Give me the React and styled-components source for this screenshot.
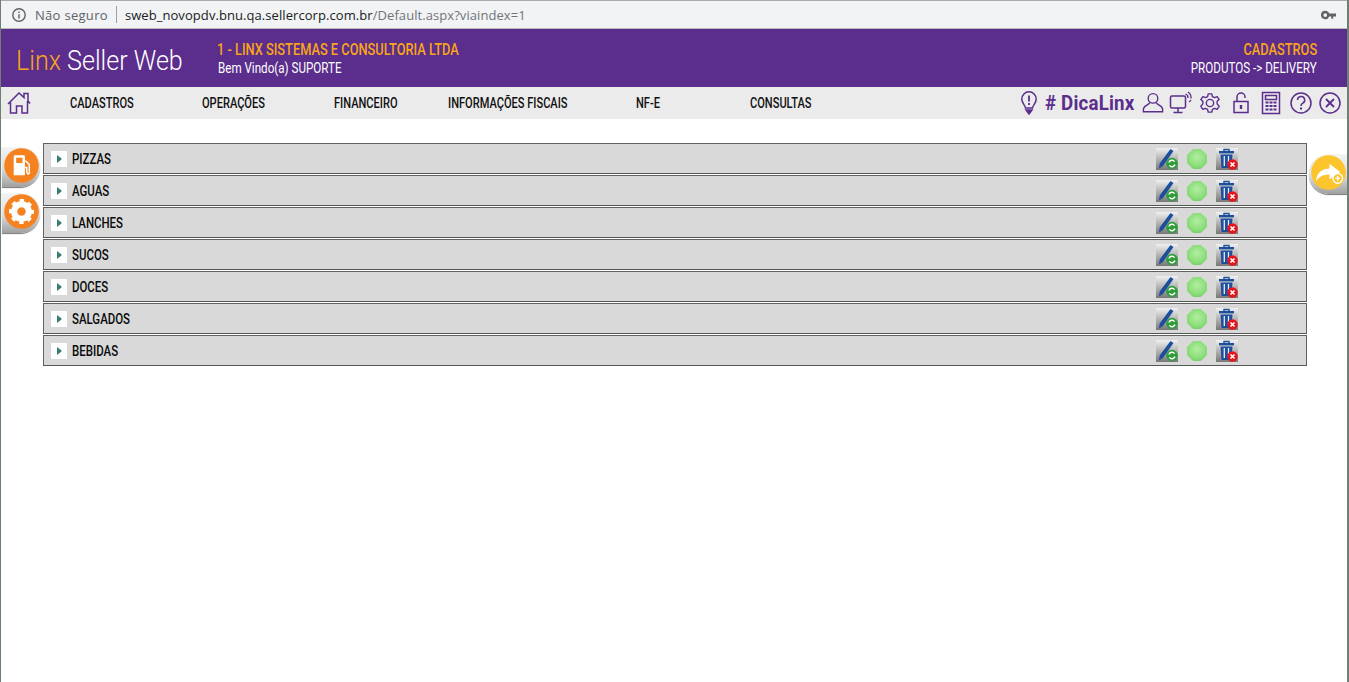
import React from 'react';
import styled, { createGlobalStyle } from 'styled-components';

const categorias = ['PIZZAS', 'AGUAS', 'LANCHES', 'SUCOS', 'DOCES', 'SALGADOS', 'BEBIDAS'];
const menu = ['CADASTROS', 'OPERAÇÕES', 'FINANCEIRO', 'INFORMAÇÕES FISCAIS', 'NF-E', 'CONSULTAS'];

const GlobalStyle = createGlobalStyle`
	html, body {
		margin: 0;
		padding: 0;
		background: #fff;
		font-family: Roboto, "Liberation Sans", sans-serif;
		overflow: hidden;
	}
`;

const Janela = styled.div`
	position: relative;
	height: 682px;
	box-sizing: border-box;
	border-left: 1px solid #6f7f74;
	border-right: 2px solid #6f7f74;
	overflow: hidden;
`;

const BarraEndereco = styled.div`
	display: flex;
	align-items: center;
	height: 29px;
	box-sizing: border-box;
	border-top: 1px solid #a9abaa;
	border-bottom: 1px solid #b9bbba;
	background: #f1f3f4;
	padding: 0 11px 0 10px;
	font-family: "Open Sans", sans-serif;
	font-size: 13px;
`;

const NaoSeguro = styled.span`
	color: #5f6368;
	margin-left: 8px;
	letter-spacing: 0.3px;
`;

const Separador = styled.span`
	width: 1px;
	height: 17px;
	background: #9aa0a6;
	margin: 0 8px;
`;

const Host = styled.span`
	color: #202124;
	letter-spacing: 0.07px;
`;

const Caminho = styled.span`
	color: #70757a;
	letter-spacing: 0.07px;
`;

const Chave = styled.svg`
	margin-left: auto;
`;

const Cabecalho = styled.header`
	display: flex;
	height: 58px;
	background: #5b2d8c;
	color: #fff;
`;

const Logo = styled.div`
	width: 216px;
	padding: 15px 0 0 15px;
	box-sizing: border-box;
	font-size: 27px;
	font-weight: 300;
	line-height: 34px;
	white-space: nowrap;
`;

const Estreito = styled.span`
	display: inline-block;
	white-space: nowrap;
	transform: scaleX(${props => props.$escala || 0.79});
	transform-origin: ${props => props.$origem || 'left'} center;
`;

const Laranja = styled.span`
	color: #f9a51a;
`;

const Empresa = styled.div`
	display: flex;
	flex-direction: column;
	padding-top: 11px;
`;

const LinhaTitulo = styled.div`
	font-size: 16px;
	font-weight: 500;
	line-height: 19px;
	color: #f9a51a;
`;

const LinhaSub = styled.div`
	font-size: 14px;
	line-height: 16px;
	margin-top: 1px;
	margin-left: 1px;
`;

const Modulo = styled.div`
	display: flex;
	flex-direction: column;
	align-items: flex-end;
	margin-left: auto;
	padding: 11px 30px 0 0;
`;

const Menu = styled.nav`
	display: flex;
	align-items: center;
	height: 32px;
	background: #ebebeb;
	padding: 0 5px 0 6px;
`;

const MenuItens = styled.div`
	display: grid;
	grid-template-columns: 132px 132px 114px 188px 114px 100px;
	margin-left: 39px;
	color: #111;
	font-size: 14px;
	font-weight: 500;
`;

const Ferramentas = styled.div`
	display: flex;
	align-items: center;
	margin-left: auto;
	color: #5b2d8c;
`;

const Dica = styled.div`
	width: 92px;
	margin-left: 4px;
	font-size: 21px;
	font-weight: 700;
	letter-spacing: 0.01em;
`;

const Ferramenta = styled.svg`
	display: block;
	width: ${props => props.$tam || 24}px;
	height: ${props => props.$tam || 24}px;
	margin-left: ${props => props.$gap || 5}px;
	fill: none;
	stroke: #5b2d8c;
	stroke-width: 1.5;
`;

const Lista = styled.main`
	display: flex;
	flex-direction: column;
	gap: 1px;
	margin: 24px 40px 0 42px;
`;

const Linha = styled.div`
	display: flex;
	align-items: center;
	height: 31px;
	box-sizing: border-box;
	border: 1px solid #616161;
	border-bottom-color: #555;
	background: #d9d9d9;
	padding: 0 68px 0 7px;
`;

const Seta = styled.span`
	display: flex;
	align-items: center;
	justify-content: center;
	width: 16px;
	height: 16px;
	background: #fff;
	&::before {
		content: '';
		border-left: 5px solid #3a7a72;
		border-top: 4px solid transparent;
		border-bottom: 4px solid transparent;
	}
`;

const Nome = styled.div`
	margin-left: 5px;
	padding-top: 2px;
	color: #0a0a0a;
	font-size: 14.5px;
	font-weight: 500;
`;

const Acoes = styled.div`
	display: flex;
	align-items: center;
	gap: 9px;
	margin-left: auto;
`;

const Quadro = styled.svg`
	display: block;
	width: ${props => props.$tam || 22}px;
	height: 22px;
`;

const Aba = styled.div`
	position: absolute;
	top: ${props => props.$topo}px;
	${props => props.$direita ? 'right: 0;' : 'left: 1px;'}
	width: 38px;
	height: 40px;
	box-sizing: border-box;
	padding: 1px 0 0 2px;
	border-radius: ${props => props.$direita ? '20px 0 0 20px' : '0 20px 20px 0'};
	background: linear-gradient(#f4f4f4, #dcdcdc 55%, #a0a0a0);
	box-shadow: 0 1px 1px #777;
`;

const Redondo = styled.svg`
	display: block;
	width: 35px;
	height: 35px;
`;

const Editar = () => (
	<Quadro viewBox="0 0 22 22">
		<defs>
			<linearGradient id="fundo" x1="0" y1="0" x2="0" y2="1">
				<stop offset="0" stopColor="#f0f0f0" />
				<stop offset="1" stopColor="#777" />
			</linearGradient>
		</defs>
		<rect width="22" height="22" fill="url(#fundo)" />
		<path d="M14.5 1 L17.5 3 L7 18 L3 20.5 L3.6 15.5 Z" fill="#1f4f9c" />
		<circle cx="16" cy="15.5" r="5.8" fill="#2e9e3a" />
		<path d="M13 14.5 A3.2 3.2 0 0 1 18.6 13.6 M19 16.5 A3.2 3.2 0 0 1 13.4 17.4" fill="none" stroke="#fff" strokeWidth="1.5" />
	</Quadro>
);

const Status = () => (
	<Quadro $tam={20} viewBox="0 0 20 22">
		<defs>
			<radialGradient id="verde" cx="0.5" cy="0.42" r="0.62">
				<stop offset="0" stopColor="#b4ee9f" />
				<stop offset="0.75" stopColor="#88dc78" />
				<stop offset="1" stopColor="#74cf68" />
			</radialGradient>
		</defs>
		<path d="M7 1 H13 Q14 1 15 2 L19 6 Q20 7 20 8 V14 Q20 15 19 16 L15 20 Q14 21 13 21 H7 Q6 21 5 20 L1 16 Q0 15 0 14 V8 Q0 7 1 6 L5 2 Q6 1 7 1 Z" fill="url(#verde)" />
	</Quadro>
);

const Excluir = () => (
	<Quadro viewBox="0 0 22 22">
		<rect width="22" height="22" fill="url(#fundo)" />
		<path d="M8 3 V1.5 H13 V3" fill="none" stroke="#1f4f9c" strokeWidth="1.4" />
		<rect x="3" y="3" width="15" height="2.4" fill="#1f4f9c" />
		<path d="M4.5 6.5 H16.5 L15.5 20 H5.5 Z" fill="#1f4f9c" />
		<path d="M8.3 8 V18 M12.5 8 V18" stroke="#e8eef8" strokeWidth="1.3" />
		<circle cx="16.5" cy="16.5" r="5.2" fill="#e8141c" />
		<path d="M14.5 14.5 L18.5 18.5 M18.5 14.5 L14.5 18.5" stroke="#fff" strokeWidth="1.7" />
	</Quadro>
);

const App = () => (
	<>
		<GlobalStyle />
		<Janela>
			<BarraEndereco>
				<svg width="16" height="16" viewBox="0 0 16 16" fill="none" stroke="#5f6368" strokeWidth="1.4">
					<circle cx="8" cy="8" r="6.2" />
					<path d="M8 7.2 V11.5 M8 4.4 V6" />
				</svg>
				<NaoSeguro>Não seguro</NaoSeguro>
				<Separador />
				<Host>sweb_novopdv.bnu.qa.sellercorp.com.br</Host>
				<Caminho>/Default.aspx?viaindex=1</Caminho>
				<Chave width="15" height="10" viewBox="0 0 16 10" fill="#5f6368">
					<path d="M4.5 0.5 A4.5 4.5 0 1 0 8.7 6.5 H11 V9 H13 V6.5 H16 V3.5 H8.7 A4.5 4.5 0 0 0 4.5 0.5 Z M4.5 3 A2 2 0 1 1 4.5 7 A2 2 0 0 1 4.5 3 Z" fillRule="evenodd" />
				</Chave>
			</BarraEndereco>

			<Cabecalho>
				<Logo><Estreito $escala={0.93}><Laranja>Linx</Laranja> Seller Web</Estreito></Logo>
				<Empresa>
					<LinhaTitulo><Estreito $escala={0.8}>1 - LINX SISTEMAS E CONSULTORIA LTDA</Estreito></LinhaTitulo>
					<LinhaSub><Estreito $escala={0.83}>Bem Vindo(a) SUPORTE</Estreito></LinhaSub>
				</Empresa>
				<Modulo>
					<LinhaTitulo><Estreito $escala={0.8} $origem="right">CADASTROS</Estreito></LinhaTitulo>
					<LinhaSub><Estreito $escala={0.83} $origem="right">PRODUTOS -&gt; DELIVERY</Estreito></LinhaSub>
				</Modulo>
			</Cabecalho>

			<Menu>
				<svg width="24" height="24" viewBox="0 0 24 24" fill="none" stroke="#5b2d8c" strokeWidth="1.5">
					<path d="M1 13 L12 2 L17 6.5 V2.5 H21 V10 L23 12.5 M3.5 11.5 V22 H9.5 V15 H15 V22 H20.5 V10" />
				</svg>
				<MenuItens>
					{menu.map(item => <div key={item}><Estreito>{item}</Estreito></div>)}
				</MenuItens>
				<Ferramentas>
					<Ferramenta $gap={0} viewBox="0 0 24 24">
						<path d="M8.5 17 C8 13.5 4.8 12.5 4.8 8 A7.2 7.2 0 0 1 19.2 8 C19.2 12.5 16 13.5 15.5 17 Z" />
						<path d="M12 4.5 V10.5 M12 12 V14" strokeWidth="1.8" />
						<path d="M9 19 H15 L12 23 Z" fill="#5b2d8c" />
					</Ferramenta>
					<Dica><Estreito $escala={0.89}>#&nbsp;DicaLinx</Estreito></Dica>
					<Ferramenta $gap={0} $tam={22} viewBox="0 0 24 24">
						<circle cx="12" cy="7" r="5.2" />
						<path d="M8.5 11.5 C7.5 14.5 1.5 14.5 1.5 19 V21.5 H22.5 V19 C22.5 14.5 16.5 14.5 15.5 11.5" />
					</Ferramenta>
					<Ferramenta $gap={5} viewBox="0 0 24 24">
						<rect x="1.5" y="5" width="15" height="12" rx="1.5" />
						<path d="M9 17 V21 M4.5 21.5 H13.5" />
						<path d="M16.5 3 A4 4 0 0 1 19 7 M19 1 A7 7 0 0 1 22 7.5 M20 11 A6 6 0 0 0 22 9" strokeWidth="1.3" />
					</Ferramenta>
					<Ferramenta $gap={6} $tam={22} viewBox="0 0 24 24">
						<circle cx="12" cy="12" r="4" />
						<path d="M10 2 H14 L14.6 5 L17 6.2 L19.8 5 L22 8.2 L19.8 10.2 V13 L22 15.6 L19.8 19 L17 17.8 L14.6 19 L14 22 H10 L9.4 19 L7 17.8 L4.2 19 L2 15.6 L4.2 13 V10.2 L2 8.2 L4.2 5 L7 6.2 L9.4 5 Z" strokeLinejoin="round" />
					</Ferramenta>
					<Ferramenta $gap={8} viewBox="0 0 24 24">
						<rect x="5" y="10.5" width="14" height="11" />
						<path d="M8 10.5 V6 A4 4 0 0 1 16 6 V7" />
						<path d="M12 14 V18" strokeWidth="2.4" />
					</Ferramenta>
					<Ferramenta $gap={6} viewBox="0 0 24 24">
						<rect x="3.5" y="1.5" width="17" height="21" />
						<rect x="6.5" y="4.5" width="11" height="4" />
						<path d="M6.5 11.5 H17.5 M6.5 15 H17.5 M6.5 18.5 H17.5" strokeWidth="2.2" strokeDasharray="3 1" />
					</Ferramenta>
					<Ferramenta $gap={6} viewBox="0 0 24 24">
						<circle cx="12" cy="12" r="10" />
						<path d="M8.5 9 A3.6 3.6 0 1 1 13.5 12.4 C12.3 13 12 13.6 12 15" />
						<path d="M12 16.5 V18.5" strokeWidth="2" />
					</Ferramenta>
					<Ferramenta $gap={5} viewBox="0 0 24 24">
						<circle cx="12" cy="12" r="10" />
						<path d="M8 8 L16 16 M16 8 L8 16" strokeWidth="1.8" />
					</Ferramenta>
				</Ferramentas>
			</Menu>

			<Lista>
				{categorias.map(nome => (
					<Linha key={nome}>
						<Seta />
						<Nome><Estreito>{nome}</Estreito></Nome>
						<Acoes>
							<Editar />
							<Status />
							<Excluir />
						</Acoes>
					</Linha>
				))}
			</Lista>

			<Aba $topo={147}>
				<Redondo viewBox="0 0 36 36">
					<circle cx="18" cy="18" r="17.8" fill="#f58220" />
					<path d="M10 9 Q10 7.5 11.5 7.5 H20 Q21.5 7.5 21.5 9 V28 H10 Z M12.5 10 V15.5 H19 V10 Z" fill="#fff" fillRule="evenodd" />
					<path d="M22 13 L26 17 V25 Q26 27 24.5 26.5 Q23.4 26 23.4 24 V20 H21.5" fill="none" stroke="#fff" strokeWidth="1.5" />
				</Redondo>
			</Aba>
			<Aba $topo={193}>
				<Redondo viewBox="0 0 36 36">
					<circle cx="18" cy="18" r="17.8" fill="#f58220" />
					<circle cx="18" cy="18" r="7.6" fill="none" stroke="#fff" strokeWidth="6.4" />
					<circle cx="18" cy="18" r="11" fill="none" stroke="#fff" strokeWidth="3.6" strokeDasharray="4.32 4.32" strokeDashoffset="2.16" />
				</Redondo>
			</Aba>
			<Aba $topo={154} $direita>
				<Redondo viewBox="0 0 36 36">
					<circle cx="18" cy="18" r="17.8" fill="#fcc42d" />
					<path d="M5 27 C6 18 12 14 19 14 V9 L30 17.5 L19 25 V20 C13 20 8.5 22 5 27 Z" fill="#fff" />
					<circle cx="27.5" cy="24" r="5" fill="#fcc42d" stroke="#fff" strokeWidth="1.4" />
					<path d="M25 24 H30 M27.5 21.5 V26.5" stroke="#fff" strokeWidth="1.4" />
				</Redondo>
			</Aba>
		</Janela>
	</>
);

export default App;
